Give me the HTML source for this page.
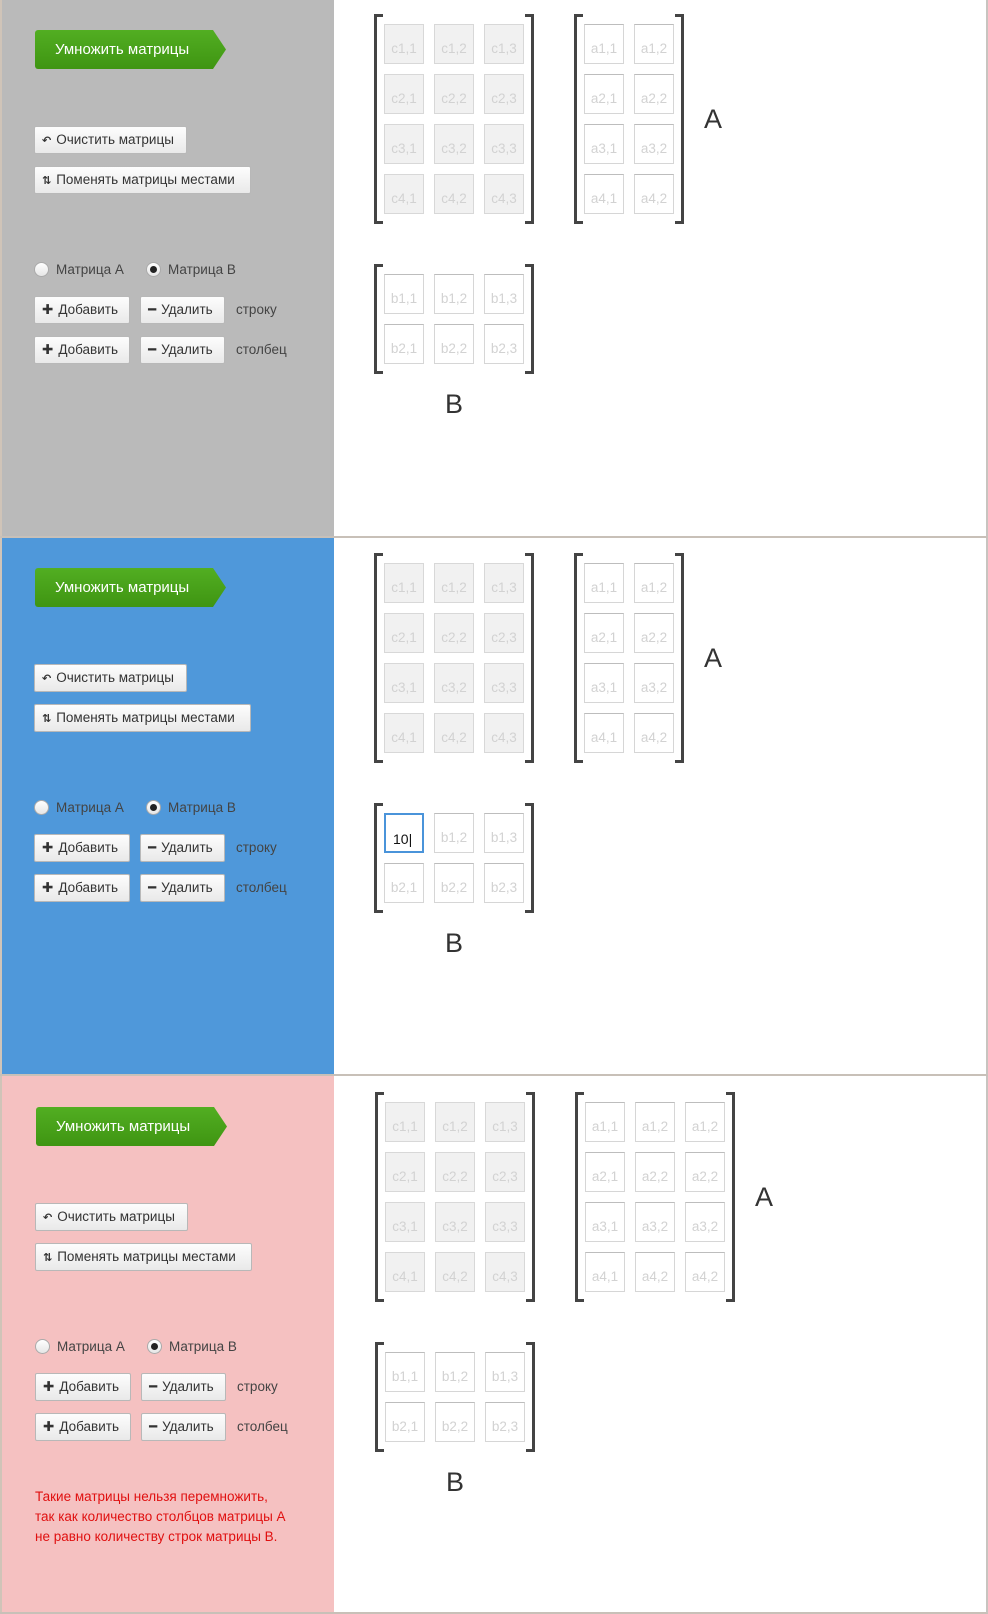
<!DOCTYPE html>
<html><head><meta charset="utf-8"><style>
*{box-sizing:border-box;margin:0;padding:0}
body{width:988px;height:1614px;position:relative;background:#fff;font-family:"Liberation Sans","DejaVu Sans",sans-serif;overflow:hidden}
.panel{position:absolute;left:0;width:988px;height:538px;border-bottom:2px solid #c8c0b8;border-right:2px solid #c8c4c0}
.left{position:absolute;left:0;top:0;width:334px;height:536px;border-left:2px solid #d0c4b8}
.gbtn{position:absolute;left:35px;top:30px;width:191px;height:39px;background:linear-gradient(#52ae22,#3f9512);color:#fff;font-size:15px;line-height:39px;padding-left:20px;clip-path:polygon(0 0,178px 0,191px 50%,178px 100%,0 100%);border-radius:3px}
.btn{position:absolute;height:28px;background:linear-gradient(#fdfdfd,#e9e9e9);border:1px solid #b8b8b8;border-radius:2px;font-size:13.5px;color:#333;line-height:26px;padding-left:7px;white-space:nowrap}
.btn b{font-weight:bold;margin-right:5px}
.lbl{position:absolute;font-size:13.5px;color:#444;line-height:16px}
.radio{position:absolute;width:15px;height:15px;border-radius:50%;background:linear-gradient(#fff,#e6e6e6);border:1px solid #aaa}
.radio.on::after{content:"";position:absolute;left:3px;top:3px;width:7px;height:7px;border-radius:50%;background:#222}
.cell{position:absolute;width:40px;height:40px;border:1px solid #d6d6d6;border-top-color:#bdbdbd;font-size:13.5px;color:#d2d2d2;text-align:center;line-height:48px;background:#fff}
.cell.c{background:#f1f1f1;border-color:#d8d8d8}
.br{position:absolute;border:3px solid #444;width:9px}
.br.l{border-right:none}
.br.r{border-left:none}
.big{position:absolute;font-size:27px;color:#333;line-height:30px}
.err{position:absolute;left:35px;top:1487px;font-size:13.5px;line-height:20px;color:#e01010}
</style></head><body>

<!-- PANEL 1 -->
<div class="panel" style="top:0">
<div class="left" style="background:#bababa"></div>
<div class="gbtn">Умножить матрицы</div>
<div class="btn" style="left:34px;top:126px;width:153px"><b style="font-size:11px">↶</b>Очистить матрицы</div>
<div class="btn" style="left:34px;top:166px;width:217px"><b style="font-size:11px">⇅</b>Поменять матрицы местами</div>
<div class="radio" style="left:34px;top:262px"></div><div class="lbl" style="left:56px;top:262px">Матрица А</div>
<div class="radio on" style="left:146px;top:262px"></div><div class="lbl" style="left:168px;top:262px">Матрица В</div>
<div class="btn" style="left:34px;top:296px;width:96px"><b>✚</b>Добавить</div>
<div class="btn" style="left:140px;top:296px;width:85px"><b>━</b>Удалить</div>
<div class="lbl" style="left:236px;top:302px">строку</div>
<div class="btn" style="left:34px;top:336px;width:96px"><b>✚</b>Добавить</div>
<div class="btn" style="left:140px;top:336px;width:85px"><b>━</b>Удалить</div>
<div class="lbl" style="left:236px;top:342px">столбец</div>

<div class="br l" style="left:374px;top:14px;height:210px"></div><div class="br r" style="left:525px;top:14px;height:210px"></div>
<div class="cell c" style="left:384px;top:24px">c1,1</div><div class="cell c" style="left:434px;top:24px">c1,2</div><div class="cell c" style="left:484px;top:24px">c1,3</div>
<div class="cell c" style="left:384px;top:74px">c2,1</div><div class="cell c" style="left:434px;top:74px">c2,2</div><div class="cell c" style="left:484px;top:74px">c2,3</div>
<div class="cell c" style="left:384px;top:124px">c3,1</div><div class="cell c" style="left:434px;top:124px">c3,2</div><div class="cell c" style="left:484px;top:124px">c3,3</div>
<div class="cell c" style="left:384px;top:174px">c4,1</div><div class="cell c" style="left:434px;top:174px">c4,2</div><div class="cell c" style="left:484px;top:174px">c4,3</div>

<div class="br l" style="left:574px;top:14px;height:210px"></div><div class="br r" style="left:675px;top:14px;height:210px"></div>
<div class="cell" style="left:584px;top:24px">a1,1</div><div class="cell" style="left:634px;top:24px">a1,2</div>
<div class="cell" style="left:584px;top:74px">a2,1</div><div class="cell" style="left:634px;top:74px">a2,2</div>
<div class="cell" style="left:584px;top:124px">a3,1</div><div class="cell" style="left:634px;top:124px">a3,2</div>
<div class="cell" style="left:584px;top:174px">a4,1</div><div class="cell" style="left:634px;top:174px">a4,2</div>
<div class="big" style="left:704px;top:104px">A</div>

<div class="br l" style="left:374px;top:264px;height:110px"></div><div class="br r" style="left:525px;top:264px;height:110px"></div>
<div class="cell" style="left:384px;top:274px">b1,1</div><div class="cell" style="left:434px;top:274px">b1,2</div><div class="cell" style="left:484px;top:274px">b1,3</div>
<div class="cell" style="left:384px;top:324px">b2,1</div><div class="cell" style="left:434px;top:324px">b2,2</div><div class="cell" style="left:484px;top:324px">b2,3</div>
<div class="big" style="left:445px;top:389px">B</div>
</div>

<!-- PANEL 2 -->
<div class="panel" style="top:538px">
<div class="left" style="background:#4f98da"></div>
<div class="gbtn">Умножить матрицы</div>
<div class="btn" style="left:34px;top:126px;width:153px"><b style="font-size:11px">↶</b>Очистить матрицы</div>
<div class="btn" style="left:34px;top:166px;width:217px"><b style="font-size:11px">⇅</b>Поменять матрицы местами</div>
<div class="radio" style="left:34px;top:262px"></div><div class="lbl" style="left:56px;top:262px">Матрица А</div>
<div class="radio on" style="left:146px;top:262px"></div><div class="lbl" style="left:168px;top:262px">Матрица В</div>
<div class="btn" style="left:34px;top:296px;width:96px"><b>✚</b>Добавить</div>
<div class="btn" style="left:140px;top:296px;width:85px"><b>━</b>Удалить</div>
<div class="lbl" style="left:236px;top:302px">строку</div>
<div class="btn" style="left:34px;top:336px;width:96px"><b>✚</b>Добавить</div>
<div class="btn" style="left:140px;top:336px;width:85px"><b>━</b>Удалить</div>
<div class="lbl" style="left:236px;top:342px">столбец</div>

<div class="br l" style="left:374px;top:15px;height:210px"></div><div class="br r" style="left:525px;top:15px;height:210px"></div>
<div class="cell c" style="left:384px;top:25px">c1,1</div><div class="cell c" style="left:434px;top:25px">c1,2</div><div class="cell c" style="left:484px;top:25px">c1,3</div>
<div class="cell c" style="left:384px;top:75px">c2,1</div><div class="cell c" style="left:434px;top:75px">c2,2</div><div class="cell c" style="left:484px;top:75px">c2,3</div>
<div class="cell c" style="left:384px;top:125px">c3,1</div><div class="cell c" style="left:434px;top:125px">c3,2</div><div class="cell c" style="left:484px;top:125px">c3,3</div>
<div class="cell c" style="left:384px;top:175px">c4,1</div><div class="cell c" style="left:434px;top:175px">c4,2</div><div class="cell c" style="left:484px;top:175px">c4,3</div>

<div class="br l" style="left:574px;top:15px;height:210px"></div><div class="br r" style="left:675px;top:15px;height:210px"></div>
<div class="cell" style="left:584px;top:25px">a1,1</div><div class="cell" style="left:634px;top:25px">a1,2</div>
<div class="cell" style="left:584px;top:75px">a2,1</div><div class="cell" style="left:634px;top:75px">a2,2</div>
<div class="cell" style="left:584px;top:125px">a3,1</div><div class="cell" style="left:634px;top:125px">a3,2</div>
<div class="cell" style="left:584px;top:175px">a4,1</div><div class="cell" style="left:634px;top:175px">a4,2</div>
<div class="big" style="left:704px;top:105px">A</div>

<div class="br l" style="left:374px;top:265px;height:110px"></div><div class="br r" style="left:525px;top:265px;height:110px"></div>
<div class="cell" style="left:384px;top:275px;border:2px solid #4a94da;color:#111;text-align:left;padding-left:7px;line-height:48px;font-size:14px">10|</div><div class="cell" style="left:434px;top:275px">b1,2</div><div class="cell" style="left:484px;top:275px">b1,3</div>
<div class="cell" style="left:384px;top:325px">b2,1</div><div class="cell" style="left:434px;top:325px">b2,2</div><div class="cell" style="left:484px;top:325px">b2,3</div>
<div class="big" style="left:445px;top:390px">B</div>
</div>

<!-- PANEL 3 -->
<div class="panel" style="top:1076px">
<div class="left" style="background:#f5c1c1"></div>
<div class="gbtn" style="left:36px;top:31px">Умножить матрицы</div>
<div class="btn" style="left:35px;top:127px;width:153px"><b style="font-size:11px">↶</b>Очистить матрицы</div>
<div class="btn" style="left:35px;top:167px;width:217px"><b style="font-size:11px">⇅</b>Поменять матрицы местами</div>
<div class="radio" style="left:35px;top:263px"></div><div class="lbl" style="left:57px;top:263px">Матрица А</div>
<div class="radio on" style="left:147px;top:263px"></div><div class="lbl" style="left:169px;top:263px">Матрица В</div>
<div class="btn" style="left:35px;top:297px;width:96px"><b>✚</b>Добавить</div>
<div class="btn" style="left:141px;top:297px;width:85px"><b>━</b>Удалить</div>
<div class="lbl" style="left:237px;top:303px">строку</div>
<div class="btn" style="left:35px;top:337px;width:96px"><b>✚</b>Добавить</div>
<div class="btn" style="left:141px;top:337px;width:85px"><b>━</b>Удалить</div>
<div class="lbl" style="left:237px;top:343px">столбец</div>

<div class="br l" style="left:375px;top:16px;height:210px"></div><div class="br r" style="left:526px;top:16px;height:210px"></div>
<div class="cell c" style="left:385px;top:26px">c1,1</div><div class="cell c" style="left:435px;top:26px">c1,2</div><div class="cell c" style="left:485px;top:26px">c1,3</div>
<div class="cell c" style="left:385px;top:76px">c2,1</div><div class="cell c" style="left:435px;top:76px">c2,2</div><div class="cell c" style="left:485px;top:76px">c2,3</div>
<div class="cell c" style="left:385px;top:126px">c3,1</div><div class="cell c" style="left:435px;top:126px">c3,2</div><div class="cell c" style="left:485px;top:126px">c3,3</div>
<div class="cell c" style="left:385px;top:176px">c4,1</div><div class="cell c" style="left:435px;top:176px">c4,2</div><div class="cell c" style="left:485px;top:176px">c4,3</div>

<div class="br l" style="left:575px;top:16px;height:210px"></div><div class="br r" style="left:726px;top:16px;height:210px"></div>
<div class="cell" style="left:585px;top:26px">a1,1</div><div class="cell" style="left:635px;top:26px">a1,2</div><div class="cell" style="left:685px;top:26px">a1,2</div>
<div class="cell" style="left:585px;top:76px">a2,1</div><div class="cell" style="left:635px;top:76px">a2,2</div><div class="cell" style="left:685px;top:76px">a2,2</div>
<div class="cell" style="left:585px;top:126px">a3,1</div><div class="cell" style="left:635px;top:126px">a3,2</div><div class="cell" style="left:685px;top:126px">a3,2</div>
<div class="cell" style="left:585px;top:176px">a4,1</div><div class="cell" style="left:635px;top:176px">a4,2</div><div class="cell" style="left:685px;top:176px">a4,2</div>
<div class="big" style="left:755px;top:106px">A</div>

<div class="br l" style="left:375px;top:266px;height:110px"></div><div class="br r" style="left:526px;top:266px;height:110px"></div>
<div class="cell" style="left:385px;top:276px">b1,1</div><div class="cell" style="left:435px;top:276px">b1,2</div><div class="cell" style="left:485px;top:276px">b1,3</div>
<div class="cell" style="left:385px;top:326px">b2,1</div><div class="cell" style="left:435px;top:326px">b2,2</div><div class="cell" style="left:485px;top:326px">b2,3</div>
<div class="big" style="left:446px;top:391px">B</div>
</div>
<div class="err">Такие матрицы нельзя перемножить,<br>так как количество столбцов матрицы А<br>не равно количеству строк матрицы В.</div>

</body></html>
